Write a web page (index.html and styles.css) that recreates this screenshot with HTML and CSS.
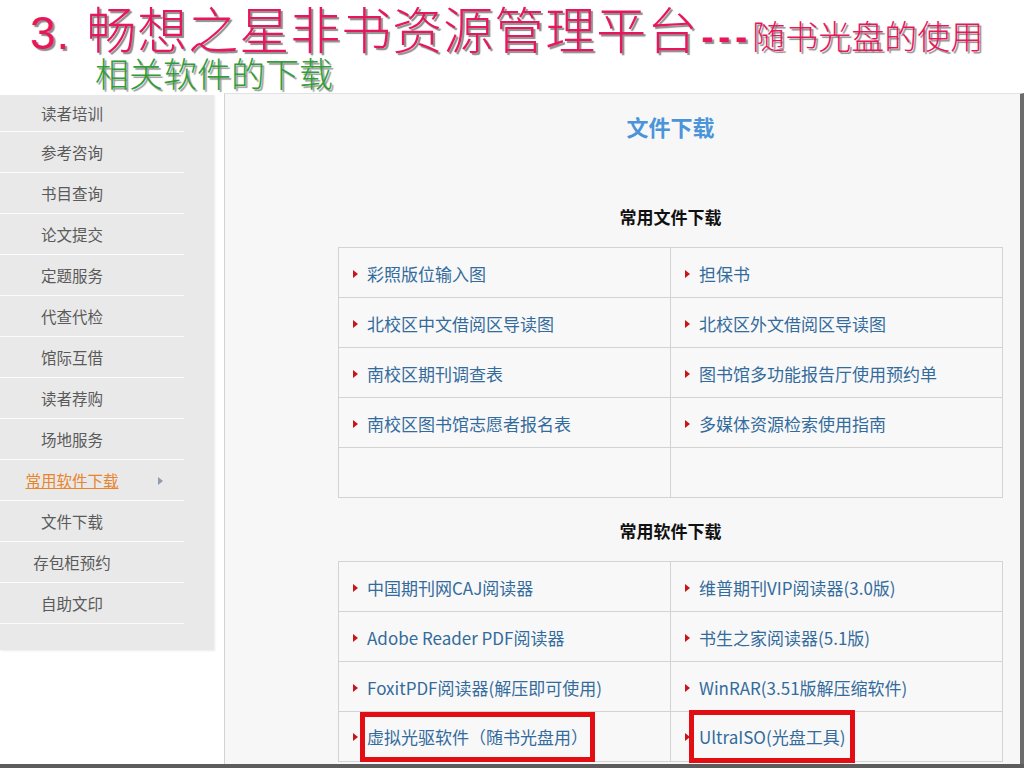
FILE: index.html
```html
<!DOCTYPE html>
<html lang="zh-CN">
<head>
  <meta charset="UTF-8" />
  <title>畅想之星非书资源管理平台</title>
  <link rel="stylesheet" href="styles.css">
</head>
<body>

  <header class="title">
    <h1 class="title-main"><span class="num">3.</span>畅想之星非书资源管理平台<span class="dash">---</span><span class="title-sub">随书光盘的使用</span></h1>
    <p class="title-second">相关软件的下载</p>
  </header>

  <div class="shot">
    <ul class="side-nav">
      <li><a>读者培训</a></li>
      <li><a>参考咨询</a></li>
      <li><a>书目查询</a></li>
      <li><a>论文提交</a></li>
      <li><a>定题服务</a></li>
      <li><a>代查代检</a></li>
      <li><a>馆际互借</a></li>
      <li><a>读者荐购</a></li>
      <li><a>场地服务</a></li>
      <li class="active"><a>常用软件下载</a><span class="nav-arrow"></span></li>
      <li><a>文件下载</a></li>
      <li><a>存包柜预约</a></li>
      <li><a>自助文印</a></li>
    </ul>

    <main class="panel">
      <h2 class="panel-title">文件下载</h2>

      <h3 class="group-title">常用文件下载</h3>
      <table class="dl-table">
        <tr>
          <td><a class="dl">彩照版位输入图</a></td>
          <td><a class="dl">担保书</a></td>
        </tr>
        <tr>
          <td><a class="dl">北校区中文借阅区导读图</a></td>
          <td><a class="dl">北校区外文借阅区导读图</a></td>
        </tr>
        <tr>
          <td><a class="dl">南校区期刊调查表</a></td>
          <td><a class="dl">图书馆多功能报告厅使用预约单</a></td>
        </tr>
        <tr>
          <td><a class="dl">南校区图书馆志愿者报名表</a></td>
          <td><a class="dl">多媒体资源检索使用指南</a></td>
        </tr>
        <tr>
          <td></td>
          <td></td>
        </tr>
      </table>

      <h3 class="group-title">常用软件下载</h3>
      <table class="dl-table">
        <tr>
          <td><a class="dl">中国期刊网CAJ阅读器</a></td>
          <td><a class="dl">维普期刊VIP阅读器(3.0版)</a></td>
        </tr>
        <tr>
          <td><a class="dl">Adobe Reader PDF阅读器</a></td>
          <td><a class="dl">书生之家阅读器(5.1版)</a></td>
        </tr>
        <tr>
          <td><a class="dl">FoxitPDF阅读器(解压即可使用)</a></td>
          <td><a class="dl">WinRAR(3.51版解压缩软件)</a></td>
        </tr>
        <tr>
          <td><a class="dl"><span class="mark mark-left">虚拟光驱软件（随书光盘用）</span></a></td>
          <td><a class="dl"><span class="mark mark-right">UltraISO(光盘工具)</span></a></td>
        </tr>
      </table>
    </main>
  </div>

</body>
</html>
```

FILE: styles.css
```css
* {
  margin: 0;
  padding: 0;
  box-sizing: border-box;
}
body {
  width: 1024px;
  height: 768px;
  overflow: hidden;
  background: #fff;
  font-family: "Noto Sans CJK SC", sans-serif;
}

/* slide title */
.title {
  height: 93px;
}
.title-main {
  height: 54px;
  padding-left: 30px;
  font-size: 50px;
  line-height: 54px;
  font-weight: 300;
  letter-spacing: 1px;
  color: #e8175d;
  text-shadow: 2px 2px 1px #8c8c8c;
  white-space: nowrap;
}
.num {
  font-family: "Liberation Sans", sans-serif;
  font-weight: normal;
  font-size: 46px;
  margin-right: 16px;
}
.dash {
  font-family: "Liberation Sans", sans-serif;
  font-weight: bold;
  font-size: 36px;
  letter-spacing: 5px;
  margin-left: 3px;
}
.title-sub {
  font-size: 33px;
  letter-spacing: 0;
}
.title-second {
  padding-left: 95px;
  font-size: 34px;
  line-height: 38px;
  font-weight: 300;
  color: #2f9e36;
  text-shadow: 2px 2px 1px #9a9a9a;
}

/* screenshot area */
.shot {
  display: flex;
  align-items: flex-start;
  height: 675px;
  border-bottom: 4px solid #5c5c5c;
}
.side-nav {
  list-style: none;
  width: 214px;
  height: 555px;
  margin-top: 2px;
  margin-right: 10px;
  background: #e9e9e9;
  box-shadow: 1px 1px 2px rgba(0, 0, 0, 0.08);
}
.side-nav li {
  position: relative;
  display: flex;
  align-items: center;
  width: 184px;
  height: 41px;
  border-bottom: 1px solid #fbfbfb;
}
.side-nav li:first-child {
  height: 37px;
}
.side-nav a {
  width: 144px;
  text-align: center;
  font-size: 15.5px;
  color: #5a5a5a;
}
.side-nav .active a {
  color: #e8842c;
  text-decoration: underline;
}
.nav-arrow {
  position: absolute;
  left: 158px;
  top: 17px;
  border-left: 5px solid #8e9bb0;
  border-top: 4px solid transparent;
  border-bottom: 4px solid transparent;
}

.panel {
  flex: 1;
  align-self: stretch;
  background: #f7f7f7;
  border-left: 1px solid #d2d2d2;
  border-top: 1px solid #e2e2e2;
  border-right: 4px solid #6c6c6c;
  padding: 17px 17px 0 113px;
  overflow: hidden;
}
.panel-title {
  text-align: center;
  font-size: 22px;
  line-height: 30px;
  color: #4a94da;
}
.group-title {
  margin-top: 64px;
  text-align: center;
  font-size: 17px;
  line-height: 24px;
  color: #111;
}
.dl-table + .group-title {
  margin-top: 21px;
}
.dl-table {
  width: 665px;
  margin-top: 18px;
  border-collapse: collapse;
  table-layout: fixed;
}
.dl-table td {
  width: 50%;
  height: 50px;
  padding: 0 0 0 14px;
  border: 1px solid #d3d3d3;
  background: #f8f8f8;
  vertical-align: middle;
}
.dl {
  display: inline-flex;
  align-items: center;
  font-size: 17px;
  color: #336b9c;
  white-space: nowrap;
}
.dl::before {
  content: "";
  margin-right: 9px;
  border-left: 5px solid #c8151b;
  border-top: 4px solid transparent;
  border-bottom: 4px solid transparent;
}

/* red highlight boxes */
.mark {
  display: inline-block;
  outline: 5px solid #e30e13;
}
.mark-left {
  line-height: 36px;
  outline-offset: 2px;
}
.mark-right {
  line-height: 33px;
  outline-offset: 5px;
}
```
